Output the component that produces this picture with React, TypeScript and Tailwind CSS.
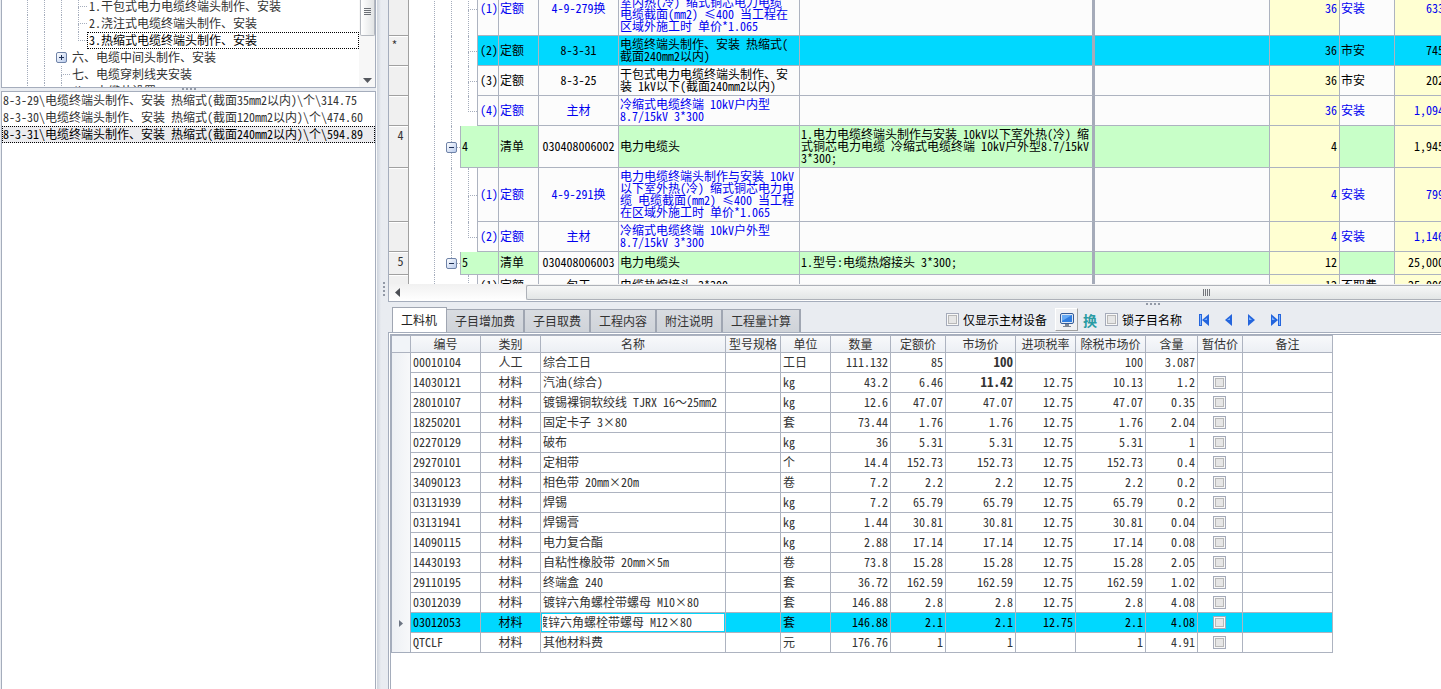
import React from "react";

//=============== TYPES ===============//
type TreeRow = {
  label: string;
  depth: number;
  expandable?: boolean;
  last?: boolean;
  selected?: boolean;
};

type BillRow = {
  mark?: string;
  kind: "item" | "quota";
  no: string;
  type: string;
  code: string;
  name: string;
  feature?: string;
  qty: string;
  major?: string;
  price: string;
  color?: string;
  selected?: boolean;
  last?: boolean;
  underLast?: boolean;
  height: string;
};

//=============== DATA ===============//
const treeRows: TreeRow[] = [
  { label: "1.干包式电力电缆终端头制作、安装", depth: 3 },
  { label: "2.浇注式电缆终端头制作、安装", depth: 3 },
  { label: "3.热缩式电缆终端头制作、安装", depth: 3, last: true, selected: true },
  { label: "六、电缆中间头制作、安装", depth: 2, expandable: true },
  { label: "七、电缆穿刺线夹安装", depth: 2 },
  { label: "八、电缆井设置", depth: 2 },
];

const quotaList = [
  "8-3-29\\电缆终端头制作、安装 热缩式(截面35mm2以内)\\个\\314.75",
  "8-3-30\\电缆终端头制作、安装 热缩式(截面120mm2以内)\\个\\474.60",
  "8-3-31\\电缆终端头制作、安装 热缩式(截面240mm2以内)\\个\\594.89",
];

const billRows: BillRow[] = [
  {
    kind: "quota",
    no: "(1)",
    type: "定额",
    code: "4-9-279换",
    name: "电力电缆终端头制作与安装 10kV以下\n室内热(冷) 缩式铜芯电力电缆\n电缆截面(mm2) ≤400 当工程在\n区域外施工时 单价*1.065",
    qty: "36",
    major: "安装",
    price: "633",
    color: "text-[#0000f0]",
    height: "h-[54px]",
  },
  {
    mark: "*",
    kind: "quota",
    no: "(2)",
    type: "定额",
    code: "8-3-31",
    name: "电缆终端头制作、安装 热缩式(\n截面240mm2以内)",
    qty: "36",
    major: "市安",
    price: "745",
    selected: true,
    height: "h-[30px]",
  },
  {
    kind: "quota",
    no: "(3)",
    type: "定额",
    code: "8-3-25",
    name: "干包式电力电缆终端头制作、安\n装 1kV以下(截面240mm2以内)",
    qty: "36",
    major: "市安",
    price: "202",
    height: "h-[30px]",
  },
  {
    kind: "quota",
    no: "(4)",
    type: "定额",
    code: "主材",
    name: "冷缩式电缆终端 10kV户内型\n8.7/15kV 3*300",
    qty: "36",
    major: "安装",
    price: "1,094",
    color: "text-[#0000f0]",
    last: true,
    height: "h-[30px]",
  },
  {
    mark: "4",
    kind: "item",
    no: "4",
    type: "清单",
    code: "030408006002",
    name: "电力电缆头",
    feature:
      "1.电力电缆终端头制作与安装 10kV以下室外热(冷) 缩\n式铜芯电力电缆 冷缩式电缆终端 10kV户外型8.7/15kV\n3*300;",
    qty: "4",
    price: "1,945",
    height: "h-[42px]",
  },
  {
    kind: "quota",
    no: "(1)",
    type: "定额",
    code: "4-9-291换",
    name: "电力电缆终端头制作与安装 10kV\n以下室外热(冷) 缩式铜芯电力电\n缆 电缆截面(mm2) ≤400 当工程\n在区域外施工时 单价*1.065",
    qty: "4",
    major: "安装",
    price: "799",
    color: "text-[#0000f0]",
    height: "h-[54px]",
  },
  {
    kind: "quota",
    no: "(2)",
    type: "定额",
    code: "主材",
    name: "冷缩式电缆终端 10kV户外型\n8.7/15kV 3*300",
    qty: "4",
    major: "安装",
    price: "1,146",
    color: "text-[#0000f0]",
    last: true,
    height: "h-[30px]",
  },
  {
    mark: "5",
    kind: "item",
    no: "5",
    type: "清单",
    code: "030408006003",
    name: "电力电缆头",
    feature: "1.型号:电缆热熔接头 3*300;",
    qty: "12",
    price: "25,000",
    last: true,
    height: "h-[23px]",
  },
  {
    kind: "quota",
    no: "(1)",
    type: "定额",
    code: "包干",
    name: "电缆热熔接头 3*300",
    qty: "12",
    major: "不取费",
    price: "25,000",
    last: true,
    underLast: true,
    height: "h-[23px]",
  },
];

const tabs = ["工料机", "子目增加费", "子目取费", "工程内容", "附注说明", "工程量计算"];

const materialHeads = [
  "编号",
  "类别",
  "名称",
  "型号规格",
  "单位",
  "数量",
  "定额价",
  "市场价",
  "进项税率",
  "除税市场价",
  "含量",
  "暂估价",
  "备注",
];

// code, category, name, unit, quantity, quota price, market price, tax rate, net price, content
const materials = [
  ["00010104", "人工", "综合工日", "工日", "111.132", "85", "100", "", "100", "3.087"],
  ["14030121", "材料", "汽油(综合)", "kg", "43.2", "6.46", "11.42", "12.75", "10.13", "1.2"],
  ["28010107", "材料", "镀锡裸铜软绞线 TJRX 16～25mm2", "kg", "12.6", "47.07", "47.07", "12.75", "47.07", "0.35"],
  ["18250201", "材料", "固定卡子 3×80", "套", "73.44", "1.76", "1.76", "12.75", "1.76", "2.04"],
  ["02270129", "材料", "破布", "kg", "36", "5.31", "5.31", "12.75", "5.31", "1"],
  ["29270101", "材料", "定相带", "个", "14.4", "152.73", "152.73", "12.75", "152.73", "0.4"],
  ["34090123", "材料", "相色带 20mm×20m", "卷", "7.2", "2.2", "2.2", "12.75", "2.2", "0.2"],
  ["03131939", "材料", "焊锡", "kg", "7.2", "65.79", "65.79", "12.75", "65.79", "0.2"],
  ["03131941", "材料", "焊锡膏", "kg", "1.44", "30.81", "30.81", "12.75", "30.81", "0.04"],
  ["14090115", "材料", "电力复合酯", "kg", "2.88", "17.14", "17.14", "12.75", "17.14", "0.08"],
  ["14430193", "材料", "自粘性橡胶带 20mm×5m", "卷", "73.8", "15.28", "15.28", "12.75", "15.28", "2.05"],
  ["29110195", "材料", "终端盒 240", "套", "36.72", "162.59", "162.59", "12.75", "162.59", "1.02"],
  ["03012039", "材料", "镀锌六角螺栓带螺母 M10×80", "套", "146.88", "2.8", "2.8", "12.75", "2.8", "4.08"],
  ["03012053", "材料", "镀锌六角螺栓带螺母 M12×80", "套", "146.88", "2.1", "2.1", "12.75", "2.1", "4.08"],
  ["QTCLF", "材料", "其他材料费", "元", "176.76", "1", "1", "", "1", "4.91"],
];

const activeCode = "03012053";

//=============== SMALL PARTS ===============//
function Toggle({ open }: { open?: boolean }) {
  return (
    <button
      type="button"
      aria-label={open ? "收起" : "展开"}
      className="block size-[11px] shrink-0 rounded-xs border border-[#6f83a8] bg-linear-to-br from-white to-[#b9cbec]"
    >
      <svg viewBox="0 0 9 9" className="block size-[9px]" stroke="#1d2f55" shapeRendering="crispEdges">
        <path d={open ? "M2 4.5H7" : "M2 4.5H7M4.5 2V7"} />
      </svg>
    </button>
  );
}

function CheckBox({ id, label }: { id?: string; label?: string }) {
  return (
    <input
      id={id}
      type="checkbox"
      aria-label={label}
      className="block size-[13px] shrink-0 appearance-none border border-[#a5abba] bg-[#e6e6e6] shadow-[inset_0_0_0_1px_#f8f8f8,inset_0_0_0_2px_#b8b8b8]"
    />
  );
}

function Dots({ className }: { className: string }) {
  return (
    <span className={`flex gap-[2px] ${className}`}>
      {[0, 1, 2, 3].map((dot) => (
        <i key={dot} className="size-[2px] bg-[#9299a6]" />
      ))}
    </span>
  );
}

//=============== LEFT: CHAPTER TREE ===============//
function ChapterTree() {
  return (
    <div className="flex h-[88px] shrink-0 overflow-hidden border border-t-0 border-[#a5adbc] bg-white">
      <ul className="-mt-0.5 min-w-0 flex-1 pl-[25px] text-[#333]">
        {treeRows.map((row) => (
          <li key={row.label} className="flex h-[17px]">
            {Array.from({ length: row.depth }, (_, level) => (
              <i
                key={level}
                className={`shrink-0 border-l border-dotted border-[#a5adbc] ${
                  row.expandable && level === row.depth - 1 ? "w-3" : "w-[17px]"
                }`}
              />
            ))}
            {row.expandable ? (
              <span className="flex w-[14px] shrink-0 items-center">
                <Toggle />
              </span>
            ) : (
              <span className="flex w-[9px] shrink-0 flex-col">
                <i className="h-[9px] border-b border-l border-dotted border-[#a5adbc]" />
                {!row.last && <i className="flex-1 border-l border-dotted border-[#a5adbc]" />}
              </span>
            )}
            <span
              className={`flex-1 border border-dotted pl-px leading-[13px] whitespace-pre ${
                row.selected ? "border-black text-black" : "border-transparent"
              }`}
            >
              {row.label}
            </span>
          </li>
        ))}
      </ul>
      <div className="flex w-4 shrink-0 flex-col items-center justify-between bg-[#f7f7f7] pb-1">
        <div className="flex h-9 w-[15px] justify-center rounded-b-xs border border-t-0 border-[#b4b8bf] bg-linear-to-r from-white to-[#e2e4e5] pt-2">
          <svg viewBox="0 0 7 8" className="h-2 w-[7px]" stroke="#6b6f75" shapeRendering="crispEdges">
            <path d="M0 .5H7M0 2.5H7M0 4.5H7M0 6.5H7" />
          </svg>
        </div>
        <svg viewBox="0 0 9 5" className="h-[5px] w-[9px]" fill="#55585e">
          <path d="M0 0H9L4.5 5Z" />
        </svg>
      </div>
    </div>
  );
}

//=============== RIGHT TOP: BILL OF QUANTITIES ===============//
function BillGuides({ row }: { row: BillRow }) {
  if (row.kind === "item") {
    return (
      <div className="flex h-full pl-[25px]">
        <i className="w-3 border-l border-dotted border-[#a5adbc]" />
        <span className="flex w-[11px] flex-col">
          <i className="ml-[5px] flex-1 border-l border-dotted border-[#a5adbc]" />
          <Toggle open />
          <i
            className={`ml-[5px] flex-1 ${row.last ? "" : "border-l border-dotted border-[#a5adbc]"}`}
          />
        </span>
        <i className="flex-1 self-center border-t border-dotted border-[#a5adbc]" />
      </div>
    );
  }

  return (
    <div className="flex h-full pl-[25px]">
      <i className="w-[17px] border-l border-dotted border-[#a5adbc]" />
      <i className={`w-[17px] ${row.underLast ? "" : "border-l border-dotted border-[#a5adbc]"}`} />
      <span className="flex flex-1 flex-col">
        <i className="flex-1 border-b border-l border-dotted border-[#a5adbc]" />
        <i className={`flex-1 ${row.last ? "" : "border-l border-dotted border-[#a5adbc]"}`} />
      </span>
    </div>
  );
}

function BillGrid() {
  const line = "border-r border-b border-[#adb3c0] pb-[2px]";

  return (
    <section className="flex h-[302px] shrink-0 flex-col border-b border-l border-[#a5adbc] bg-white">
      <div className="min-h-0 flex-1 overflow-hidden">
        <table className="-mt-[18px] w-[calc(100%+5px)] table-fixed border-separate border-spacing-0 leading-3 text-black">
          <colgroup>
            <col className="w-5" />
            <col className="w-[52px]" />
            <col className="w-[17px]" />
            <col className="w-[21px]" />
            <col className="w-10" />
            <col className="w-20" />
            <col className="w-[181px]" />
            <col className="w-[295px]" />
            <col />
            <col className="w-[70px]" />
            <col className="w-[55px]" />
            <col className="w-[51px]" />
          </colgroup>
          <tbody>
            {billRows.map((row, index) => {
              const isItem = row.kind === "item";
              const base = row.selected ? "bg-[#00d8ff]" : isItem ? "bg-[#c8ffc8]" : "bg-[#fcfcfc]";
              const yellow = row.selected ? "bg-[#00d8ff]" : "bg-[#ffffd2]";

              return (
                <tr key={index} className={row.color}>
                  <th
                    className={`border-r border-b border-[#a0a0a0] bg-[#f0f0f0] pt-[3px] align-top font-normal text-[#333] shadow-[inset_0_1px_0_#fff] ${
                      row.mark === "*" ? "pr-2" : "pl-1"
                    }`}
                  >
                    {row.mark}
                  </th>
                  <td
                    colSpan={isItem ? 1 : 2}
                    className={`border-r border-[#adb3c0] bg-white p-0 ${row.height}`}
                  >
                    <BillGuides row={row} />
                  </td>
                  <td
                    colSpan={isItem ? 2 : 1}
                    className={`${line} ${base} ${isItem ? "pl-px" : "pl-[2px] text-center"}`}
                  >
                    {row.no}
                  </td>
                  <td className={`${line} ${base} pl-px`}>{row.type}</td>
                  <td className={`${line} text-center ${isItem ? "bg-[#fcfcfc]" : base}`}>{row.code}</td>
                  <td className={`${line} ${base} pl-px whitespace-pre`}>{row.name}</td>
                  <td
                    className={`border-r-[3px] border-b border-r-[#a5abb9] border-b-[#adb3c0] pb-[2px] pl-px whitespace-pre ${base}`}
                  >
                    {row.feature}
                  </td>
                  <td className={`${line} ${base}`} />
                  <td className={`${line} ${yellow} pr-[2px] text-right`}>{row.qty}</td>
                  <td className={`${line} ${base} pl-px`}>{row.major}</td>
                  <td className={`${line} ${yellow} pr-px text-right`}>{row.price}</td>
                </tr>
              );
            })}
          </tbody>
        </table>
      </div>

      {/*========= HORIZONTAL SCROLLBAR =========*/}
      <div className="flex h-[17px] shrink-0 items-center bg-linear-to-b from-[#f1f1f1] to-white">
        <svg viewBox="0 0 5 9" className="ml-1.5 h-[9px] w-[5px]" fill="#4c4f55">
          <path d="M5 0V9L0 4.5Z" />
        </svg>
        <div className="ml-[126px] flex h-[15px] flex-1 items-center rounded-l-xs border border-r-0 border-[#adb1b8] bg-linear-to-b from-[#f6f7f7] to-[#e3e6e6]">
          <svg viewBox="0 0 8 7" className="ml-[74%] h-[7px] w-2" stroke="#73767b" shapeRendering="crispEdges">
            <path d="M.5 0V7M2.5 0V7M4.5 0V7M6.5 0V7" />
          </svg>
        </div>
      </div>
    </section>
  );
}

//=============== RIGHT MIDDLE: TABS & TOOLBAR ===============//
function TabBar() {
  return (
    <div className="flex h-[25px] shrink-0 items-end pl-1">
      <div role="tablist" className="flex shrink-0 items-end">
        {tabs.map((tab, index) => (
          <button
            key={tab}
            type="button"
            role="tab"
            aria-selected={index === 0}
            className={
              index === 0
                ? "h-[25px] border border-b-0 border-[#a0a6b2] bg-white pr-[9px] pl-2 text-[#222]"
                : "h-[23px] border-t border-r-2 border-[#a0a6b2] bg-linear-to-b from-[#d9dce1] to-[#cfd3d9] px-2 text-[#333]"
            }
          >
            {tab}
          </button>
        ))}
      </div>

      <div className="ml-[145px] flex h-full shrink-0 items-center text-black">
        <CheckBox id="only-main" />
        <label htmlFor="only-main" className="ml-1 w-[88px]">
          仅显示主材设备
        </label>
        <button
          type="button"
          aria-label="显示"
          className="ml-1 flex size-[23px] items-center justify-center border border-[#fff] border-r-[#a0a0a0] border-b-[#a0a0a0] bg-[#f0f1f3]"
        >
          <svg viewBox="0 0 16 16" className="size-4">
            <rect x="1.5" y="1.5" width="13" height="10" rx="1.5" fill="#dfe8f4" stroke="#355c98" />
            <rect x="3" y="3" width="10" height="7" fill="#2f7de0" />
            <path d="M3 3H13L3 9Z" fill="#67aaf4" />
            <path d="M6 12H10V14H12V15H4V14H6Z" fill="#7d8694" />
          </svg>
        </button>
        <button type="button" className="ml-1 w-4 text-sm font-bold text-[#2a9ba3]">
          换
        </button>
        <span className="ml-[7px]">
          <CheckBox id="lock-name" />
        </span>
        <label htmlFor="lock-name" className="ml-1">
          锁子目名称
        </label>
        <div className="ml-[17px] flex items-center gap-4">
          <button type="button" aria-label="首条">
            <svg viewBox="0 0 10 12" className="h-3 w-2.5" fill="#2465dd">
              <path d="M0 0H3V12H0ZM10 0V12L3 6Z" />
              <path d="M1 1H2V11H1ZM8 4V6H5Z" fill="#7fb4ff" />
            </svg>
          </button>
          <button type="button" aria-label="上一条">
            <svg viewBox="0 0 7 12" className="h-3 w-[7px]" fill="#2465dd">
              <path d="M7 0V12L0 6Z" />
              <path d="M5 4V6H2Z" fill="#7fb4ff" />
            </svg>
          </button>
          <button type="button" aria-label="下一条">
            <svg viewBox="0 0 7 12" className="h-3 w-[7px]" fill="#2465dd">
              <path d="M0 0V12L7 6Z" />
              <path d="M1 3V6H4Z" fill="#7fb4ff" />
            </svg>
          </button>
          <button type="button" aria-label="末条">
            <svg viewBox="0 0 10 12" className="h-3 w-2.5" fill="#2465dd">
              <path d="M7 0H10V12H7ZM0 0V12L7 6Z" />
              <path d="M8 1H9V11H8ZM1 3V6H4Z" fill="#7fb4ff" />
            </svg>
          </button>
        </div>
      </div>
    </div>
  );
}

//=============== RIGHT BOTTOM: MATERIALS ===============//
function MaterialGrid() {
  const line = "border-r border-b border-[#adb3c0]";
  const textCell = `${line} pt-0 pb-[2px]`;

  return (
    <table className="w-[942px] table-fixed border-separate border-spacing-0 border-l border-[#a5adbc] leading-3 text-[#333]">
      <colgroup>
        <col className="w-[19px]" />
        <col className="w-[70px]" />
        <col className="w-[60px]" />
        <col className="w-[185px]" />
        <col className="w-[55px]" />
        <col className="w-[50px]" />
        <col className="w-[60px]" />
        <col className="w-[55px]" />
        <col className="w-[70px]" />
        <col className="w-[60px]" />
        <col className="w-[70px]" />
        <col className="w-[52px]" />
        <col className="w-[45px]" />
        <col className="w-[90px]" />
      </colgroup>
      <thead>
        <tr className="h-[18px]">
          <th className={`${line} border-t bg-[#f1f4f8] p-0`} />
          {materialHeads.map((head) => (
            <th
              key={head}
              className={`${line} border-t bg-linear-to-b from-[#f8f9fb] to-[#eceff4] p-0 font-normal whitespace-nowrap`}
            >
              {head}
            </th>
          ))}
        </tr>
      </thead>
      <tbody>
        {materials.map(([code, category, name, unit, quantity, quota, market, tax, net, content], index) => {
          const active = code === activeCode;

          return (
            <tr key={code} className={`h-5 ${active ? "bg-[#00d8ff] text-black" : "bg-white"}`}>
              <td
                className={`border-r border-[#a5adbc] bg-linear-to-r from-[#edf0f4] to-[#f7f8fa] p-0 ${
                  index === materials.length - 1 ? "border-b" : ""
                }`}
              >
                {active && (
                  <svg viewBox="0 0 4 7" className="ml-[7px] block h-[7px] w-1" fill="#6d7583">
                    <path d="M0 0V7L4 3.5Z" />
                  </svg>
                )}
              </td>
              <td className={`${textCell} pl-[2px]`}>{code}</td>
              <td className={`${textCell} text-center`}>{category}</td>
              {active ? (
                <td className={`${line} p-0`}>
                  <input
                    type="text"
                    aria-label="名称"
                    defaultValue={name}
                    className="block h-[19px] w-full border border-[#00d8ff] bg-white px-px pb-[2px] -indent-[7px] text-[#333] outline-none"
                  />
                </td>
              ) : (
                <td className={`${textCell} pl-[2px] whitespace-nowrap`}>{name}</td>
              )}
              <td className={line} />
              <td className={`${textCell} pl-[2px]`}>{unit}</td>
              <td className={`${textCell} pr-[2px] text-right`}>{quantity}</td>
              <td className={`${textCell} pr-[2px] text-right`}>{quota}</td>
              {/* A price that differs from the quota price is shown in bold. */}
              <td className={`${textCell} pr-[2px] text-right ${market !== quota ? "text-[13px] font-bold" : ""}`}>
                {market}
              </td>
              <td className={`${textCell} pr-[2px] text-right`}>{tax}</td>
              <td className={`${textCell} pr-[2px] text-right`}>{net}</td>
              <td className={`${textCell} pr-[2px] text-right`}>{content}</td>
              <td className={`${line} p-0`}>
                {index > 0 && (
                  <span className="flex justify-center pr-px">
                    <CheckBox label={`${code} 暂估价`} />
                  </span>
                )}
              </td>
              <td className={line} />
            </tr>
          );
        })}
      </tbody>
    </table>
  );
}

//=============== APP ===============//
export default function App() {
  return (
    <div className="flex h-screen overflow-hidden bg-[#e9ecf1] font-['Noto_Sans_Mono_CJK_SC','Noto_Sans_CJK_SC',sans-serif] text-xs">
      <aside className="flex w-[376px] shrink-0 flex-col pl-px">
        <ChapterTree />
        <div className="flex h-[3px] shrink-0 justify-center">
          <Dots className="" />
        </div>
        <ul className="flex-1 border border-b-0 border-[#a5adbc] bg-white text-[#333]">
          {quotaList.map((item, index) => (
            <li
              key={item}
              className={`h-[17px] border border-dotted leading-[13px] whitespace-pre ${
                index === 2 ? "border-black bg-[#ebebee] text-black" : "border-transparent"
              }`}
            >
              {item}
            </li>
          ))}
        </ul>
      </aside>

      {/*========= VERTICAL SPLITTER =========*/}
      <div className="flex w-3 shrink-0 items-start justify-center border-x border-r-[#e9ecf1] border-l-[#f8f9fa] bg-linear-to-r from-[#cdd3dc] to-[#e9ecf1] to-40% pt-[282px]">
        <Dots className="ml-1 flex-col" />
      </div>

      <main className="flex min-w-0 flex-1 flex-col">
        <BillGrid />
        <div className="h-[5px] shrink-0 pt-px">
          <Dots className="ml-[72%]" />
        </div>
        <TabBar />
        <div className="min-h-0 flex-1 overflow-hidden border-t border-l border-[#a5adbc] bg-white pt-px pl-px">
          <div className="h-full border-t border-l border-[#a5adbc]">
            <MaterialGrid />
          </div>
        </div>
      </main>
    </div>
  );
}
